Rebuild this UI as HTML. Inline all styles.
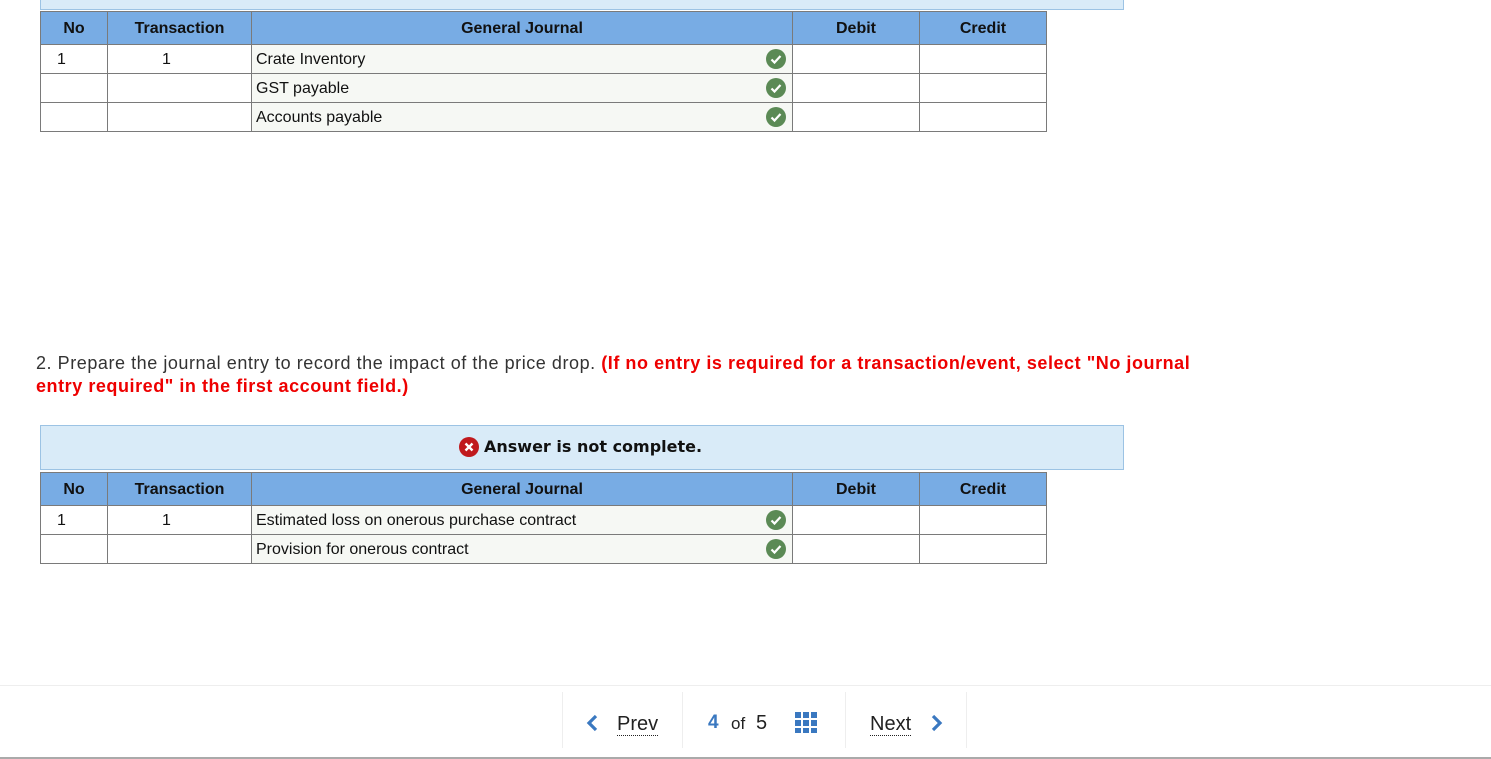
<!DOCTYPE html><html><head><style>
body{margin:0;width:1491px;height:759px;position:relative;background:#fff;font-family:"Liberation Sans",Arial,sans-serif;overflow:hidden}
.ban{position:absolute;left:40px;width:1082px;background:#d9ebf8;border:1px solid #9cc3e4}
table{position:absolute;left:40px;border-collapse:collapse;font-size:16px;color:#111}
td,th{border:1px solid #7a7a7a;padding:0;}
th{background:#78ace4;height:31px;font-weight:bold;font-size:16px;padding-top:1px}
td{height:26px;padding-top:2px}
td.j{background:#f6f8f4;padding-left:4px;position:relative}
.ck{position:absolute;right:6px;top:4px;width:20px;height:20px;border-radius:50%;background:#5b8a55}
.ck svg{display:block}
.n{padding-left:16px}
.t{padding-left:54px}
p{position:absolute;left:36px;top:352px;margin:0;font-size:18px;line-height:23px;color:#333;width:1170px;letter-spacing:0.55px}
p b{color:#e00}
</style></head><body>
<div class="ban" style="top:-2px;height:10px"></div>
<table style="top:11px">
<tr><th style="width:66px">No</th><th style="width:143px">Transaction</th><th style="width:540px">General Journal</th><th style="width:126px">Debit</th><th style="width:126px">Credit</th></tr>
<tr><td class="n">1</td><td class="t">1</td><td class="j">Crate Inventory<span class="ck"><svg width="20" height="20"><path d="M5.5 10.5l3 3 6-6.5" stroke="#fff" stroke-width="2.2" fill="none"/></svg></span></td><td></td><td></td></tr>
<tr><td></td><td></td><td class="j">GST payable<span class="ck"><svg width="20" height="20"><path d="M5.5 10.5l3 3 6-6.5" stroke="#fff" stroke-width="2.2" fill="none"/></svg></span></td><td></td><td></td></tr>
<tr><td></td><td></td><td class="j">Accounts payable<span class="ck"><svg width="20" height="20"><path d="M5.5 10.5l3 3 6-6.5" stroke="#fff" stroke-width="2.2" fill="none"/></svg></span></td><td></td><td></td></tr>
</table>
<p>2. Prepare the journal entry to record the impact of the price drop. <b>(If no entry is required for a transaction/event, select "No journal entry required" in the first account field.)</b></p>
<div class="ban" style="top:425px;height:43px"></div>
<div style="position:absolute;left:459px;top:437px;width:20px;height:20px;border-radius:50%;background:#c0191d"><svg width="20" height="20"><path d="M6.5 6.5l7 7M13.5 6.5l-7 7" stroke="#fff" stroke-width="2.4"/></svg></div>
<div style="position:absolute;left:484px;top:437px;font-family:'DejaVu Sans',sans-serif;font-weight:bold;font-size:16px;color:#111">Answer is not complete.</div>
<table style="top:472px">
<tr><th style="width:66px">No</th><th style="width:143px">Transaction</th><th style="width:540px">General Journal</th><th style="width:126px">Debit</th><th style="width:126px">Credit</th></tr>
<tr><td class="n">1</td><td class="t">1</td><td class="j">Estimated loss on onerous purchase contract<span class="ck"><svg width="20" height="20"><path d="M5.5 10.5l3 3 6-6.5" stroke="#fff" stroke-width="2.2" fill="none"/></svg></span></td><td></td><td></td></tr>
<tr><td></td><td></td><td class="j">Provision for onerous contract<span class="ck"><svg width="20" height="20"><path d="M5.5 10.5l3 3 6-6.5" stroke="#fff" stroke-width="2.2" fill="none"/></svg></span></td><td></td><td></td></tr>
</table>
<div style="position:absolute;left:0;top:685px;width:1491px;height:1px;background:#eee"></div>
<div style="position:absolute;left:0;top:757px;width:1491px;height:2px;background:#aaa"></div>
<div style="position:absolute;top:692px;left:562px;width:1px;height:56px;background:#eee"></div>
<div style="position:absolute;top:692px;left:682px;width:1px;height:56px;background:#eee"></div>
<div style="position:absolute;top:692px;left:845px;width:1px;height:56px;background:#eee"></div>
<div style="position:absolute;top:692px;left:966px;width:1px;height:56px;background:#eee"></div>
<svg style="position:absolute;left:586px;top:714px" width="14" height="18"><path d="M10 2L3 9l7 7" stroke="#3a78c0" stroke-width="3.2" fill="none"/></svg>
<div style="position:absolute;left:617px;top:713px;font-size:20px;color:#222;border-bottom:1px dotted #222;line-height:22px">Prev</div>
<div style="position:absolute;left:708px;top:712px;font-size:19px;color:#3a78c0;font-weight:bold">4</div>
<div style="position:absolute;left:731px;top:714px;font-size:17px;color:#222">of</div>
<div style="position:absolute;left:756px;top:712px;font-size:20px;color:#222">5</div>
<svg style="position:absolute;left:795px;top:712px" width="23" height="22"><g fill="#3a78c0"><rect x="0" y="0" width="6" height="6"/><rect x="8" y="0" width="6" height="6"/><rect x="16" y="0" width="6" height="6"/><rect x="0" y="8" width="6" height="6"/><rect x="8" y="8" width="6" height="6"/><rect x="16" y="8" width="6" height="6"/><rect x="0" y="16" width="6" height="5"/><rect x="8" y="16" width="6" height="5"/><rect x="16" y="16" width="6" height="5"/></g></svg>
<div style="position:absolute;left:870px;top:713px;font-size:20px;color:#222;border-bottom:1px dotted #222;line-height:22px">Next</div>
<svg style="position:absolute;left:929px;top:714px" width="14" height="18"><path d="M4 2l7 7-7 7" stroke="#3a78c0" stroke-width="3.2" fill="none"/></svg>
</body></html>
